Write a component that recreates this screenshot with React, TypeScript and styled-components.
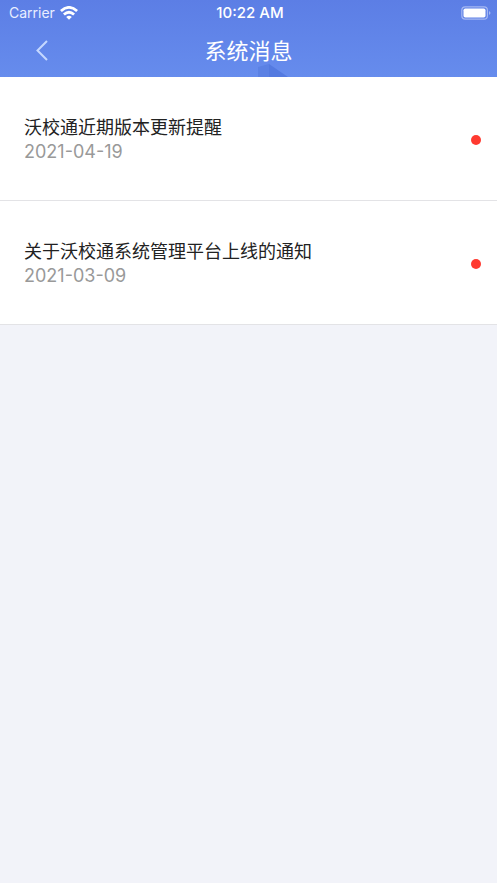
import React from "react";
import styled, { createGlobalStyle } from "styled-components";

const GlobalStyle = createGlobalStyle`
  * { box-sizing: border-box; }
  body {
    margin: 0;
    background: #f2f3f9;
    font-family: Inter, "Noto Sans CJK SC", sans-serif;
  }
`;

const Page = styled.div`
  min-height: 100vh;
  background: #f2f3f9;
`;

const Header = styled.header`
  position: relative;
  overflow: hidden;
  color: #fff;
  background: linear-gradient(#5c7ee5, #668ced);
`;

const Decoration = styled.svg`
  position: absolute;
  left: 52%;
  bottom: 0;
`;

const StatusBar = styled.div`
  position: relative;
  display: grid;
  grid-template-columns: 1fr auto 1fr;
  align-items: center;
  height: 26px;
  padding: 0 6px 0 9px;
  font-size: 14px;
  line-height: 26px;
`;

const Network = styled.div`
  display: flex;
  align-items: center;
  gap: 5px;
  color: #e9eeff;
`;

const Clock = styled.time`
  font-size: 15px;
  font-weight: 500;
`;

const Battery = styled.svg`
  justify-self: end;
`;

const NavBar = styled.div`
  position: relative;
  display: grid;
  grid-template-columns: 64px 1fr 64px;
  align-items: center;
  height: 51px;
  padding: 0 10px 2px;
`;

const BackButton = styled.button`
  display: flex;
  align-items: center;
  justify-content: center;
  height: 44px;
  padding: 0;
  border: 0;
  background: none;
  color: #c5d8ff;
  cursor: pointer;
`;

const Title = styled.h1`
  margin: 0;
  font-size: 22px;
  font-weight: 400;
  line-height: 32px;
  text-align: center;
`;

const MessageList = styled.ul`
  margin: 0;
  padding: 0;
  list-style: none;
`;

const Message = styled.li`
  display: flex;
  align-items: center;
  justify-content: space-between;
  padding: 39px 16px 37px 24px;
  background: #fff;
  border-bottom: 1px solid #e3e3e6;
`;

const Subject = styled.h2`
  margin: 0;
  color: #222;
  font-size: 18px;
  font-weight: 400;
  line-height: 24px;
`;

const MessageDate = styled.time`
  display: block;
  color: #999;
  font-size: 18px;
  line-height: 23px;
`;

const UnreadDot = styled.span`
  flex: none;
  width: 10px;
  height: 10px;
  border-radius: 50%;
  background: #ff3a30;
`;

const messages = [
  { subject: "沃校通近期版本更新提醒", date: "2021-04-19" },
  { subject: "关于沃校通系统管理平台上线的通知", date: "2021-03-09" },
];

export default function App() {
  return (
    <Page>
      <GlobalStyle />
      <Header>
        <Decoration width="30" height="13" viewBox="0 0 30 13" aria-hidden="true">
          <path d="M0 3 11 0V13H0Z" fill="#5b81e4" />
          <path d="M11 0 30 13H11Z" fill="#547ae0" />
        </Decoration>
        <StatusBar>
          <Network>
            <span>Carrier</span>
            <svg width="18" height="14" viewBox="0 0 18 14" aria-hidden="true">
              <g fill="none" stroke="#fff" strokeWidth="2.8">
                <path d="M.9 5Q9-2.2 17.1 5" />
                <path d="M3.9 8.5Q9 4.1 14.1 8.5" />
              </g>
              <path d="M6.2 11Q9 8.5 11.8 11L9 13.8Z" fill="#fff" />
            </svg>
          </Network>
          <Clock>10:22 AM</Clock>
          <Battery width="30" height="14" viewBox="0 0 30 14" aria-hidden="true">
            <rect x=".8" y=".8" width="25.6" height="12.4" rx="3.4" fill="none" stroke="#a5b8f2" strokeWidth="1.2" />
            <rect x="2.5" y="2.5" width="22" height="9" rx="1.8" fill="#fff" />
            <path d="M28 5Q31 7 28 9Z" fill="#a5b8f2" />
          </Battery>
        </StatusBar>
        <NavBar>
          <BackButton type="button" aria-label="返回">
            <svg width="12" height="21" viewBox="0 0 12 21" aria-hidden="true">
              <path d="M11 1 1.5 10.5 11 20" fill="none" stroke="currentColor" strokeWidth="2" />
            </svg>
          </BackButton>
          <Title>系统消息</Title>
        </NavBar>
      </Header>
      <main>
        <MessageList>
          {messages.map((message) => (
            <Message key={message.date}>
              <div>
                <Subject>{message.subject}</Subject>
                <MessageDate dateTime={message.date}>{message.date}</MessageDate>
              </div>
              <UnreadDot role="img" aria-label="未读" />
            </Message>
          ))}
        </MessageList>
      </main>
    </Page>
  );
}
